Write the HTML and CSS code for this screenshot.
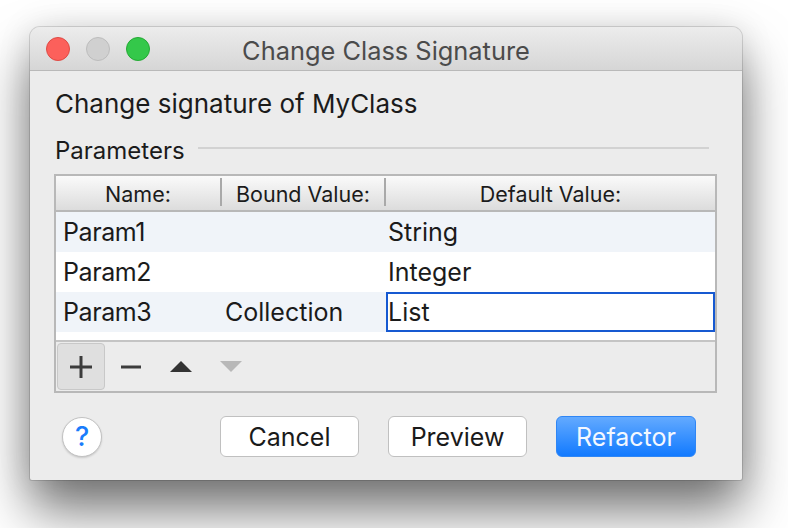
FILE: index.html
```html
<!DOCTYPE html>
<html>
<head>
<meta charset="utf-8">
<link rel="stylesheet" href="styles.css">
</head>
<body>
<div class="screen">
  <div class="window">
    <div class="titlebar">
      <div class="lights">
        <span class="light red"></span>
        <span class="light gray"></span>
        <span class="light green"></span>
      </div>
      <div class="title">Change Class Signature</div>
      <div></div>
    </div>
    <div class="content">
      <div class="heading">Change signature of MyClass</div>
      <div class="group"><span class="group-label">Parameters</span><span class="rule"></span></div>
      <div class="table">
        <div class="thead">
          <div class="th c1">Name:</div>
          <div class="sep"></div>
          <div class="th c2">Bound Value:</div>
          <div class="sep"></div>
          <div class="th c3">Default Value:</div>
        </div>
        <div class="row alt">
          <div class="td t1">Param1</div>
          <div class="td t2"></div>
          <div class="td t3">String</div>
        </div>
        <div class="row">
          <div class="td t1">Param2</div>
          <div class="td t2"></div>
          <div class="td t3">Integer</div>
        </div>
        <div class="row alt">
          <div class="td t1">Param3</div>
          <div class="td t2">Collection</div>
          <div class="td t3 editing">List</div>
        </div>
        <div class="spacer"></div>
        <div class="toolbar">
          <div class="tool pressed">
            <svg width="22" height="22" viewBox="0 0 22 22"><path d="M11 0v22M0 11h22" stroke="#3c3c3c" stroke-width="3" fill="none"/></svg>
          </div>
          <div class="tool">
            <svg width="20" height="4" viewBox="0 0 20 4"><path d="M0 2h20" stroke="#3c3c3c" stroke-width="3" fill="none"/></svg>
          </div>
          <div class="tool">
            <svg width="22" height="11" viewBox="0 0 22 11"><path d="M11 0L22 11H0Z" fill="#333"/></svg>
          </div>
          <div class="tool">
            <svg width="22" height="11" viewBox="0 0 22 11"><path d="M0 0H22L11 11Z" fill="#b8b8b8"/></svg>
          </div>
        </div>
      </div>
      <div class="footer">
        <div class="help">?</div>
        <div class="fill"></div>
        <div class="btn">Cancel</div>
        <div class="btn">Preview</div>
        <div class="btn primary">Refactor</div>
      </div>
    </div>
  </div>
</div>
</body>
</html>
```
FILE: styles.css
```css
html, body {
  margin: 0;
  padding: 0;
  background: #ffffff;
}
body {
  width: 788px;
  height: 528px;
  overflow: hidden;
  font-family: Inter, "Liberation Sans", sans-serif;
  color: #1b1b1b;
}
.screen {
  padding: 27px 0 0 30px;
}
.window {
  width: 712px;
  height: 453px;
  box-sizing: border-box;
  border-radius: 10px 10px 2px 2px;
  background: #ececec;
  box-shadow: 0 0 0 1px rgba(0,0,0,0.13), 0 30px 52px rgba(0,0,0,0.55), 0 0 34px rgba(0,0,0,0.1);
  overflow: hidden;
  display: flex;
  flex-direction: column;
}
.titlebar {
  height: 44px;
  box-sizing: border-box;
  border-bottom: 1px solid #b9b9b9;
  background: linear-gradient(#ececec, #d6d6d6);
  display: grid;
  grid-template-columns: 1fr auto 1fr;
  align-items: center;
}
.lights {
  display: flex;
  gap: 16px;
  padding-left: 16px;
}
.light {
  width: 24px;
  height: 24px;
  border-radius: 50%;
  box-sizing: border-box;
}
.red { background: #fc605b; border: 1px solid #de4a44; }
.gray { background: #d0d0d0; border: 1px solid #bcbcbc; }
.green { background: #34c84a; border: 1px solid #24a934; }
.title {
  font-size: 25.4px;
  color: #4b4b4b;
  padding-top: 3px;
}
.content {
  flex: 1;
  padding: 18px 25px 0 24px;
  display: flex;
  flex-direction: column;
}
.heading {
  font-size: 26px;
  line-height: 30px;
  padding-left: 1px;
}
.group {
  margin-top: 17px;
  display: flex;
  align-items: center;
  height: 28px;
  padding-left: 1px;
}
.group-label {
  font-size: 24px;
}
.rule {
  flex: 1;
  height: 2px;
  background: #d2d2d2;
  margin: 0 8px 4px 13px;
}
.table {
  margin-top: 10px;
  border: 2px solid #b8b8b8;
  background: #ffffff;
}
.thead {
  display: flex;
  height: 34px;
  border-bottom: 2px solid #b8b8b8;
  background: linear-gradient(#fafafa, #dcdcdc);
  align-items: stretch;
}
.th {
  font-size: 21.5px;
  text-align: center;
  line-height: 36px;
  white-space: nowrap;
}
.c1 { width: 164px; }
.c2 { width: 162px; }
.c3 { flex: 1; }
.sep {
  width: 2px;
  background: #a9a9a9;
  margin: 2px 0 4px;
}
.row {
  display: grid;
  grid-template-columns: 165px 164px 1fr;
  height: 40px;
  background: #ffffff;
}
.row.alt { background: #f0f4f9; }
.td {
  font-size: 25px;
  line-height: 40px;
  white-space: nowrap;
}
.t1 { padding-left: 7px; letter-spacing: -0.4px; }
.t2 { padding-left: 4px; }
.t3 { padding-left: 3px; }
.editing {
  background: #ffffff;
  border: 2px solid #1659d1;
  line-height: 36px;
  padding-left: 0;
  margin-left: 1px;
}
.spacer {
  height: 8px;
  background: #ffffff;
  border-bottom: 2px solid #c4c4c4;
}
.toolbar {
  height: 49px;
  background: #ececec;
  display: flex;
  gap: 2px;
  padding: 1px 0 0 1px;
  box-sizing: border-box;
}
.tool {
  width: 48px;
  height: 47px;
  box-sizing: border-box;
  display: flex;
  align-items: center;
  justify-content: center;
}
.tool.pressed {
  background: #dfdfdf;
  border: 1px solid #c8c8c8;
  border-radius: 4px;
}
.footer {
  margin-top: 23px;
  display: flex;
  align-items: center;
  gap: 29px;
  padding-right: 21px;
}
.help {
  width: 40px;
  height: 40px;
  margin-left: 8px;
  box-sizing: border-box;
  border-radius: 50%;
  background: #ffffff;
  border: 1px solid #c2c2c2;
  box-shadow: 0 1px 2px rgba(0,0,0,0.15);
  color: #1a7cfb;
  font-size: 27px;
  font-weight: 500;
  display: flex;
  align-items: center;
  justify-content: center;
}
.fill { flex: 1; }
.btn {
  width: 139px;
  height: 41px;
  box-sizing: border-box;
  border: 1px solid #c0c0c0;
  border-radius: 6px;
  background: #ffffff;
  font-size: 25px;
  display: flex;
  align-items: center;
  justify-content: center;
  color: #1a1a1a;
}
.btn.primary {
  width: 140px;
  border: 1px solid #2f86f5;
  background: linear-gradient(#63aaff, #127aff);
  color: #f4f8ff;
}
```
